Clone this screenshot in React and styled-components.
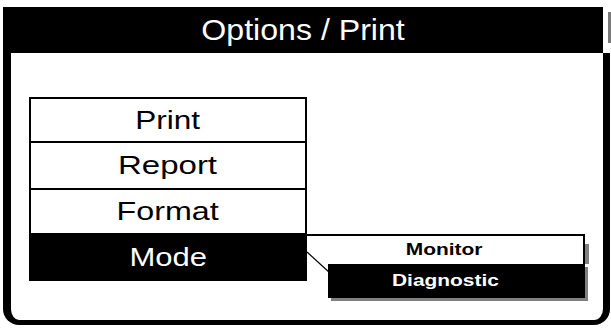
import styled, { createGlobalStyle } from 'styled-components';

const GlobalStyle = createGlobalStyle`
  * {
    box-sizing: border-box;
  }
  body {
    margin: 0;
    background: #fff;
    font-family: "Liberation Sans", Arial, sans-serif;
  }
`;

const Frame = styled.div`
  margin: 7px 0 0 3px;
  width: 607px;
  display: flex;
  flex-direction: column;
`;

const Header = styled.div`
  position: relative;
  width: 600px;
  height: 46px;
  background: #000;
  color: #fff;
  display: flex;
  align-items: center;
  justify-content: center;

  &::after {
    content: '';
    position: absolute;
    left: 605px;
    top: 5px;
    width: 3px;
    height: 31px;
    background: #7a7a7a;
  }
`;

const Stretch = styled.span`
  display: inline-block;
  font-size: ${(p) => p.size}px;
  font-weight: ${(p) => (p.bold ? 700 : 400)};
  transform: scaleX(${(p) => p.sx});
  white-space: nowrap;
`;

const Body = styled.div`
  height: 272px;
  border-left: 8px solid #000;
  border-right: 7px solid #000;
  border-bottom: 5px solid #000;
  border-bottom-left-radius: 16px;
  border-bottom-right-radius: 16px;
  padding: 44px 0 0 18px;
  display: flex;
  align-items: flex-start;
`;

const Menu = styled.div`
  width: 278px;
  border: 2px solid #000;
  display: flex;
  flex-direction: column;
`;

const MenuItem = styled.div`
  height: ${(p) => p.h}px;
  display: flex;
  align-items: center;
  justify-content: center;
  background: ${(p) => (p.active ? '#000' : '#fff')};
  color: ${(p) => (p.active ? '#fff' : '#000')};
  border-top: ${(p) => (p.first ? 'none' : '2px solid #000')};
`;

const Submenu = styled.div`
  position: relative;
  margin-top: 137px;
  margin-left: -2px;
  width: 280px;
  display: flex;
  flex-direction: column;
`;

const SubItem = styled.div`
  position: relative;
  height: 30px;
  border-top: 2px solid #000;
  border-right: 2px solid #000;
  display: flex;
  align-items: center;
  justify-content: center;
  color: #000;

  &::after {
    content: '';
    position: absolute;
    right: -6px;
    top: 8px;
    bottom: 0;
    width: 4px;
    background: #808080;
  }
`;

const SubActive = styled.div`
  margin-left: 23px;
  height: 34px;
  background: #000;
  color: #fff;
  display: flex;
  align-items: center;
  justify-content: center;
  padding-right: 23px;
  box-shadow: 3px 3px 0 #808080;
`;

const Connector = styled.svg`
  position: absolute;
  left: 0;
  top: 0;
  overflow: visible;
`;

const items = [
  { label: 'Print', h: 42, sx: 1.26 },
  { label: 'Report', h: 47, sx: 1.32 },
  { label: 'Format', h: 45, sx: 1.29 },
  { label: 'Mode', h: 46, sx: 1.24, active: true },
];

const App = () => {
  return (
    <>
      <GlobalStyle />
      <Frame>
        <Header>
          <Stretch size={30} sx={1.07}>Options / Print</Stretch>
        </Header>
        <Body>
          <Menu>
            {items.map((it, i) => (
              <MenuItem key={it.label} h={it.h} active={it.active} first={i === 0}>
                <Stretch size={25} sx={it.sx}>{it.label}</Stretch>
              </MenuItem>
            ))}
          </Menu>
          <Submenu>
            <Connector width="30" height="45">
              <line x1="2" y1="18" x2="25" y2="39" stroke="#000" strokeWidth="1.2" />
            </Connector>
            <SubItem>
              <Stretch size={17} bold sx={1.23}>Monitor</Stretch>
            </SubItem>
            <SubActive>
              <Stretch size={17} bold sx={1.23}>Diagnostic</Stretch>
            </SubActive>
          </Submenu>
        </Body>
      </Frame>
    </>
  );
};

export default App;
